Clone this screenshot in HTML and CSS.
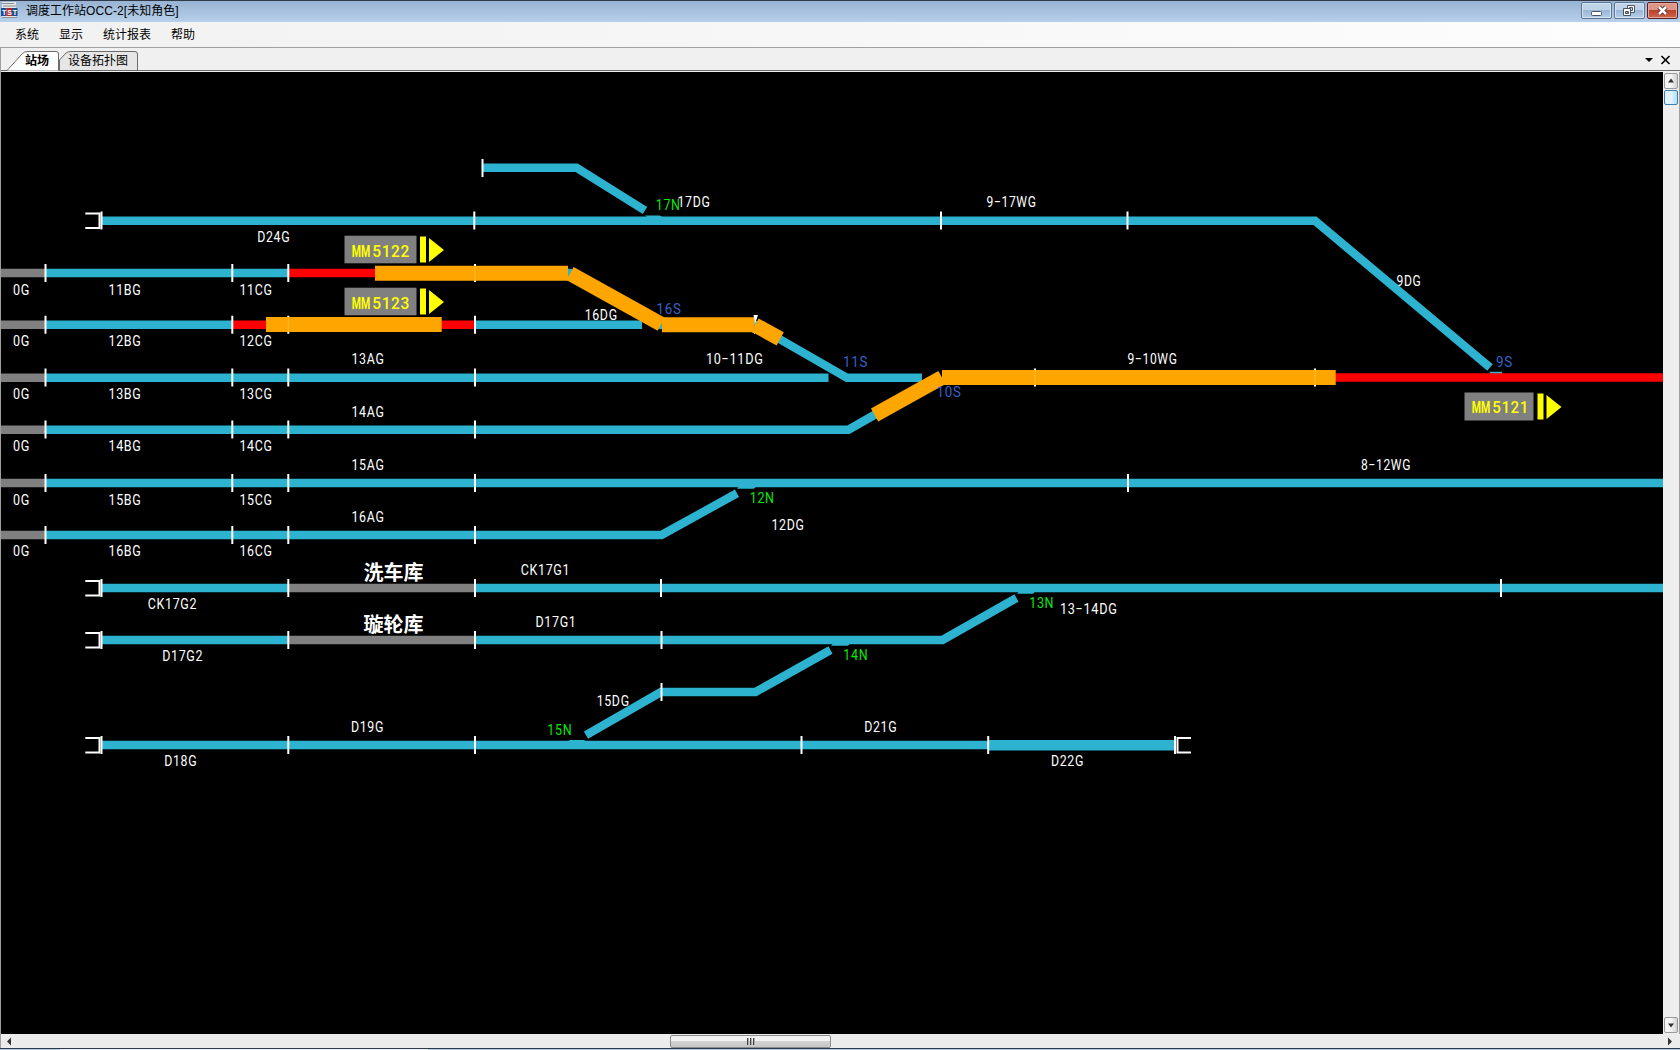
FILE: index.html
```html
<!DOCTYPE html>
<html lang="zh-CN">
<head>
<meta charset="utf-8">
<title>调度工作站OCC-2[未知角色]</title>
<link rel="stylesheet" href="styles.css">
</head>
<body>
<div class="window">
  <header class="titlebar">
    <svg class="app-icon" width="17" height="17" viewBox="0 0 17 17">
      <rect x="1" y="0" width="14" height="16" fill="#e4e6e8"/>
      <path d="M1 1.500H13M2 4H15M1 15.500H16" stroke="#8c8f94" stroke-width="1"/>
      <rect x="0" y="6" width="5.500" height="8" fill="#1d4f8f"/><rect x="5.500" y="6" width="5.500" height="8" fill="#b8242e"/><rect x="11" y="6" width="5.500" height="8" fill="#1d4f8f"/>
      <text class="app-icon-text" x="1" y="13" textLength="15">TST</text>
    </svg>
    <span class="title">调度工作站<span class="title-latin">OCC-2[</span>未知角色<span class="title-latin">]</span></span>
    <div class="winbtns">
      <span class="winbtn"><svg width="28" height="15"><rect x="9.500" y="8.500" width="10" height="4" rx="1" fill="#fff" stroke="#4a5463"/></svg></span>
      <span class="winbtn"><svg width="28" height="15" fill="#fff" stroke="#4a5463"><path d="M12.500 2.500h7v7h-7z M14.500 4.500h3v3h-3z" fill-rule="evenodd"/><path d="M8.500 5.500h7v7h-7z M10.500 8.500h3v2h-3z" fill-rule="evenodd"/></svg></span>
      <span class="winbtn close"><svg width="28" height="15"><path d="M11 4l7 7M18 4l-7 7" stroke="#5b2a2a" stroke-width="4.500"/><path d="M11 4l7 7M18 4l-7 7" stroke="#fff" stroke-width="2.500"/></svg></span>
    </div>
  </header>
  <nav class="menu"><span>系统</span><span>显示</span><span>统计报表</span><span>帮助</span></nav>
  <div class="tabs">
    <svg class="tab-shape" width="140" height="24">
      <path d="M58.500 22V12L65 5Q67 3.500 70 3.500H134Q136.500 3.500 136.500 6V22" fill="#e6e6e6" stroke="#6c6c6c"/>
      <path d="M0 22.500H6L21 6Q23 3.500 27 3.500H55Q57.500 3.500 57.500 6V22.500" fill="#fff" stroke="#6c6c6c"/>
    </svg>
    <span class="tab active">站场</span><span class="tab">设备拓扑图</span>
    <svg class="tab-tools" width="30" height="12"><path d="M0 4h8l-4 4z" fill="#000"/><path d="M16.500 2l8 8M24.500 2l-8 8" stroke="#000" stroke-width="1.600"/></svg>
  </div>
  <main class="view">
    <svg class="yard" width="1662" height="962" viewBox="1 72 1662 962">
      <!-- idle track -->
      <g class="off">
        <path d="M1 273H45M1 324.800H45M1 377.800H45M1 429.700H45M1 483H45M1 535H45M288 588H475M288 640H475"/>
      </g>
      <!-- free track -->
      <g class="free">
        <path d="M483 167.800H576.500L645 210.500"/>
        <path d="M102 220.700H1315L1490 367.500"/>
        <path d="M45 273H288M474 273H570L661 325H755L847 377.800H922"/>
        <path d="M45 324.800H232M475 324.800H642"/>
        <path d="M45 377.800H828.500"/>
        <path d="M45 429.700H848.500L876 414"/>
        <path d="M45 483H1663"/>
        <path d="M45 535H661.500L737 493.300"/>
        <path d="M102 588H288M475 588H1663"/>
        <path d="M102 640H288M475 640H942.500L1016.500 598"/>
        <path d="M586 735.200L661 692H755.500L830.500 650"/>
        <path d="M102 745H989"/>
        <path class="wide" d="M989 745.200H1175"/>
      </g>
      <g class="point">
        <path d="M645 215.500H660L663 217.500H648z"/>
        <path d="M831 372H840L851 381.800H846z"/>
        <path d="M739 486.500H756L754 488.700H737z"/>
        <path d="M1019 591.500H1035L1033 593.700H1017z"/>
        <path d="M833 643.500H850L848 645.700H831z"/>
        <path d="M570 740H585L583 742H567z"/>
        <path d="M1489 371.800H1502V374H1491z"/>
      </g>
      <!-- occupied track -->
      <path class="busy" d="M288 273H376M232 324.800H475M1335 377.500H1663"/>
      <!-- section joints -->
      <path class="joint" d="M482.500 159v18M101.500 211.500v18M474.300 211.500v18M941 211.500v18M1127.500 211.500v18
        M45.500 264v18M232.300 264v18M288.300 264v18M475 264v18
        M45.500 315.800v18M232.300 315.800v18M288.300 315.800v18M475 315.800v18
        M45.500 368.500v18M232.300 368.500v18M288.300 368.500v18M475 368.500v18M1035 368.500v18M1315 368.500v18
        M45.500 420.500v18M232.300 420.500v18M288.300 420.500v18M475 420.500v18
        M45.500 474v18M232.300 474v18M288.300 474v18M475 474v18M1128 474v18
        M45.500 526v18M232.300 526v18M288.300 526v18M475 526v18
        M101.500 579v18M288.300 579v18M475 579v18M661 579v18M1501 579v18
        M101.500 631v18M288.300 631v18M475 631v18M661.500 631v18M661.500 683v18
        M101.500 736v18M288.300 736v18M475 736v18M801.500 736v18M988.200 736v18M1175 736v18"/>
      <path class="joint" d="M85.300 213.500H99.500V228H85.300M85.300 581H99.500V595.500H85.300M85.300 633H99.500V647.500H85.300M85.300 738H99.500V752.500H85.300M1191 738H1177.500V752.500H1191"/>
      <!-- locked route -->
      <path class="route" d="M375 273.300H568M662 324.700H754.500M266 324.500H441.700M942 377.500H1335.700"/>
      <path d="M753.500 315h4.500l-3 9zM752 332l3 -1v3z" fill="#fff"/>
      <path class="route" d="M570 273.500L661.300 324.300M755 325L780.200 338.800M874.600 415L942 377.500"/>
      <path class="seam" d="M475 266v15M288.300 317v15M1035 370v15M1315 370v15"/>

      <g class="label">
        <text x="257.200" y="242" textLength="33" lengthAdjust="spacingAndGlyphs">D24G</text>
        <text x="13" y="294.500" textLength="17" lengthAdjust="spacingAndGlyphs">0G</text>
        <text x="13" y="346" textLength="17" lengthAdjust="spacingAndGlyphs">0G</text>
        <text x="13" y="399" textLength="17" lengthAdjust="spacingAndGlyphs">0G</text>
        <text x="13" y="451" textLength="17" lengthAdjust="spacingAndGlyphs">0G</text>
        <text x="13" y="504.500" textLength="17" lengthAdjust="spacingAndGlyphs">0G</text>
        <text x="13" y="556" textLength="17" lengthAdjust="spacingAndGlyphs">0G</text>
        <text x="108.500" y="294.500" textLength="33" lengthAdjust="spacingAndGlyphs">11BG</text>
        <text x="108.500" y="346" textLength="33" lengthAdjust="spacingAndGlyphs">12BG</text>
        <text x="108.500" y="399" textLength="33" lengthAdjust="spacingAndGlyphs">13BG</text>
        <text x="108.500" y="451" textLength="33" lengthAdjust="spacingAndGlyphs">14BG</text>
        <text x="108.500" y="504.500" textLength="33" lengthAdjust="spacingAndGlyphs">15BG</text>
        <text x="108.500" y="556" textLength="33" lengthAdjust="spacingAndGlyphs">16BG</text>
        <text x="239.500" y="294.500" textLength="33" lengthAdjust="spacingAndGlyphs">11CG</text>
        <text x="239.500" y="346" textLength="33" lengthAdjust="spacingAndGlyphs">12CG</text>
        <text x="239.500" y="399" textLength="33" lengthAdjust="spacingAndGlyphs">13CG</text>
        <text x="239.500" y="451" textLength="33" lengthAdjust="spacingAndGlyphs">14CG</text>
        <text x="239.500" y="504.500" textLength="33" lengthAdjust="spacingAndGlyphs">15CG</text>
        <text x="239.500" y="556" textLength="33" lengthAdjust="spacingAndGlyphs">16CG</text>
        <text x="351.500" y="364.200" textLength="33" lengthAdjust="spacingAndGlyphs">13AG</text>
        <text x="351.500" y="416.700" textLength="33" lengthAdjust="spacingAndGlyphs">14AG</text>
        <text x="351.500" y="470.200" textLength="33" lengthAdjust="spacingAndGlyphs">15AG</text>
        <text x="351.500" y="522" textLength="33" lengthAdjust="spacingAndGlyphs">16AG</text>
        <text x="147.700" y="609" textLength="49.500" lengthAdjust="spacingAndGlyphs">CK17G2</text>
        <text x="162.200" y="661" textLength="41" lengthAdjust="spacingAndGlyphs">D17G2</text>
        <text x="164.200" y="766.200" textLength="33" lengthAdjust="spacingAndGlyphs">D18G</text>
        <text x="351" y="732" textLength="33" lengthAdjust="spacingAndGlyphs">D19G</text>
        <text x="677.500" y="207.300" textLength="33" lengthAdjust="spacingAndGlyphs">17DG</text>
        <text x="986.500" y="207.300" textLength="50" lengthAdjust="spacingAndGlyphs">9−17WG</text>
        <text x="584.700" y="320" textLength="33" lengthAdjust="spacingAndGlyphs">16DG</text>
        <text x="706" y="364.200" textLength="57.500" lengthAdjust="spacingAndGlyphs">10−11DG</text>
        <text x="1127.500" y="364.200" textLength="50" lengthAdjust="spacingAndGlyphs">9−10WG</text>
        <text x="1396.500" y="286.200" textLength="25" lengthAdjust="spacingAndGlyphs">9DG</text>
        <text x="1361" y="470.200" textLength="50" lengthAdjust="spacingAndGlyphs">8−12WG</text>
        <text x="771.500" y="530.200" textLength="33" lengthAdjust="spacingAndGlyphs">12DG</text>
        <text x="520.700" y="575.200" textLength="49.500" lengthAdjust="spacingAndGlyphs">CK17G1</text>
        <text x="535.500" y="627" textLength="41" lengthAdjust="spacingAndGlyphs">D17G1</text>
        <text x="1060" y="614" textLength="57.500" lengthAdjust="spacingAndGlyphs">13−14DG</text>
        <text x="596.700" y="706" textLength="33" lengthAdjust="spacingAndGlyphs">15DG</text>
        <text x="864.200" y="732.200" textLength="33" lengthAdjust="spacingAndGlyphs">D21G</text>
        <text x="1051" y="766.200" textLength="33" lengthAdjust="spacingAndGlyphs">D22G</text>
      </g>
      <g class="label normal">
        <text x="655.700" y="210.300" textLength="25" lengthAdjust="spacingAndGlyphs">17N</text>
        <text x="749.700" y="503" textLength="25" lengthAdjust="spacingAndGlyphs">12N</text>
        <text x="1029.200" y="608" textLength="25" lengthAdjust="spacingAndGlyphs">13N</text>
        <text x="843.300" y="660" textLength="25" lengthAdjust="spacingAndGlyphs">14N</text>
        <text x="547.300" y="735" textLength="25" lengthAdjust="spacingAndGlyphs">15N</text>
      </g>
      <g class="label reverse">
        <text x="656.500" y="314" textLength="25" lengthAdjust="spacingAndGlyphs">16S</text>
        <text x="843" y="367" textLength="25" lengthAdjust="spacingAndGlyphs">11S</text>
        <text x="936.500" y="397" textLength="25" lengthAdjust="spacingAndGlyphs">10S</text>
        <text x="1496" y="367" textLength="17" lengthAdjust="spacingAndGlyphs">9S</text>
      </g>
      <g class="depot">
        <text x="363.500" y="579.500">洗车库</text>
        <text x="363.500" y="631.500">璇轮库</text>
      </g>
      <!-- trains -->
      <g class="train">
        <rect x="344.500" y="235.700" width="72" height="27.600"/>
        <text class="mm" x="351.700" y="257.200" textLength="18.500" lengthAdjust="spacingAndGlyphs">MM</text><text x="372.300" y="257.200" textLength="37.500" lengthAdjust="spacingAndGlyphs">5122</text>
        <path d="M420 236.500h6v26h-6zM429 238l15 12-15 12z"/>
      </g>
      <g class="train">
        <rect x="344.500" y="287.700" width="72" height="27.600"/>
        <text class="mm" x="351.700" y="308.700" textLength="18.500" lengthAdjust="spacingAndGlyphs">MM</text><text x="372.300" y="308.700" textLength="37.500" lengthAdjust="spacingAndGlyphs">5123</text>
        <path d="M420 288.500h6v26h-6zM429 290l15 12-15 12z"/>
      </g>
      <g class="train">
        <rect x="1464.500" y="392.500" width="69" height="28"/>
        <text class="mm" x="1471.700" y="413.300" textLength="18.500" lengthAdjust="spacingAndGlyphs">MM</text><text x="1492.300" y="413.300" textLength="36.500" lengthAdjust="spacingAndGlyphs">5121</text>
        <path d="M1537.500 393.500h6v26h-6zM1546.500 395l15 12-15 12z"/>
      </g>
    </svg>
    <div class="vscroll">
      <span class="vbtn"><svg width="12" height="13"><path d="M3 8.500l3-4 3 4z" fill="#333"/></svg></span>
      <span class="vthumb"></span>
      <span class="vspace"></span>
      <span class="vbtn"><svg width="12" height="13"><path d="M3 5.500l3 4 3-4z" fill="#333"/></svg></span>
    </div>
  </main>
  <div class="hscroll">
    <svg width="12" height="14"><path d="M10 3.500v8l-4-4z" fill="#333"/></svg>
    <span class="hthumb"><i></i><i></i><i></i></span>
    <svg width="12" height="14"><path d="M4 3.500v8l4-4z" fill="#333"/></svg>
  </div>
  <footer class="taskedge"></footer>
</div>
</body>
</html>
```
FILE: styles.css
```css
* { box-sizing: border-box; }
body { margin: 0; background: #000; font: 12px/16px "Noto Sans CJK SC", sans-serif; color: #000; overflow: hidden; }
.window { width: 1680px; height: 1050px; display: flex; flex-direction: column; background: #f0f0f0; }
svg { display: block; flex: none; }

.titlebar { height: 22px; flex: none; display: flex; align-items: flex-start; border-top: 1px solid #30384a; background: linear-gradient(#98b3d2, #b7d0eb); }
.app-icon { margin: 1px 0 0 1px; }
.app-icon-text { font: bold 7px "Liberation Sans", sans-serif; fill: #fff; }
.title { margin: 1px 0 0 8px; flex: 1; }
.title-latin { font: 12px/16px "Liberation Sans", sans-serif; letter-spacing: .1px; }
.winbtns { display: flex; gap: 2px; padding: 1px 2px 0 0; }
.winbtn { width: 31px; height: 17px; border: 1px solid #5c7593; border-radius: 2px; box-shadow: inset 0 0 0 1px #d5e4f4; background: linear-gradient(#bfd3e9 0 45%, #98b5d5 46%, #b4cfe9); }
.winbtn.close { border-color: #5a2020; box-shadow: inset 0 0 0 1px #e6a79c; background: linear-gradient(#dd9686 0 45%, #bb3d28 46%, #cf6a4b); }

.menu { height: 25px; flex: none; display: flex; gap: 20px; padding: 4px 0 0 15px; background: linear-gradient(90deg, #f1f1f1, #fdfdfd); }
.tabs { height: 25px; flex: none; display: flex; position: relative; border-top: 1px solid #a0a0a0; border-left: 1px solid #a0a0a0; background: #f0f0f0; }
.tabs::after { content: ""; position: absolute; left: 0; right: 0; bottom: 1px; height: 1px; background: #6c6c6c; z-index: 0; }
.tab-shape { position: absolute; left: 0; top: 0; z-index: 1; }
.tab { position: relative; z-index: 2; padding: 4px 0 0 19px; }
.tab.active { padding-left: 24px; font-weight: bold; }
.tab-tools { margin: 6px 5px 0 auto; }

.view { height: 962px; flex: none; display: flex; border-left: 1px solid #a0a0a0; background: #f0f0f0; }
.yard { background: #000; }
.off path, .free path, .busy { fill: none; stroke-width: 8.400; }
.off path { stroke: #808080; }
.free path { stroke: #2db3d0; }
.free .wide { stroke-width: 10.500; }
.busy { stroke: #f00; }
.point path { fill: #2db3d0; }
.joint { fill: none; stroke: #fff; stroke-width: 2; }
.route { fill: none; stroke: #ffa500; stroke-width: 15; }
.seam { stroke: #ffbb3d; stroke-width: 1; }
.label text { font: 15px Roboto, sans-serif; letter-spacing: .8px; fill: #fff; }
.label.normal text { fill: #0be60b; }
.label.reverse text { fill: #3560c8; }
.depot text { font: bold 20px "Noto Sans CJK SC", sans-serif; fill: #fff; }
.train rect { fill: #808080; }
.train path, .train text { fill: #ff0; }
.train text { font: 500 17px Roboto, sans-serif; letter-spacing: .6px; }
.train .mm { font-weight: 700; letter-spacing: 0; }

.vscroll { width: 17px; display: flex; flex-direction: column; padding: 1px 2px 1px 1px; border-right: 1px solid #a0a0a0; background: #eee; }
.vbtn { width: 14px; height: 16px; border: 1px solid #999; border-radius: 2px; background: linear-gradient(90deg, #f4f4f4 50%, #d2d2d2); }
.vthumb { height: 15px; width: 14px; margin-top: 1px; border: 1px solid #3c7fb1; border-radius: 2px; background: linear-gradient(90deg, #e3f4fc 50%, #b0def5); }
.vspace { flex: 1; }
.hscroll { height: 14px; flex: none; display: flex; justify-content: space-between; align-items: stretch; border-left: 1px solid #a0a0a0; padding: 0 4px 0 0; background: #ececec; }
.hthumb { width: 161px; height: 13px; margin: 1px 0 0 -177px; display: flex; justify-content: center; align-items: center; gap: 2px; border: 1px solid #8d8d8d; border-radius: 2px; background: linear-gradient(#f3f3f3 45%, #d2d2d2 50%, #c6c6c6); }
.hthumb i { width: 1px; height: 7px; background: #444; box-shadow: 1px 0 #aaa; }
.taskedge { height: 2px; flex: none; border-top: 1px solid #2b3a4d; background: linear-gradient(90deg, #b5c9df 60px, #eef2f6 60px 428px, #b5c9df 428px); }
```
